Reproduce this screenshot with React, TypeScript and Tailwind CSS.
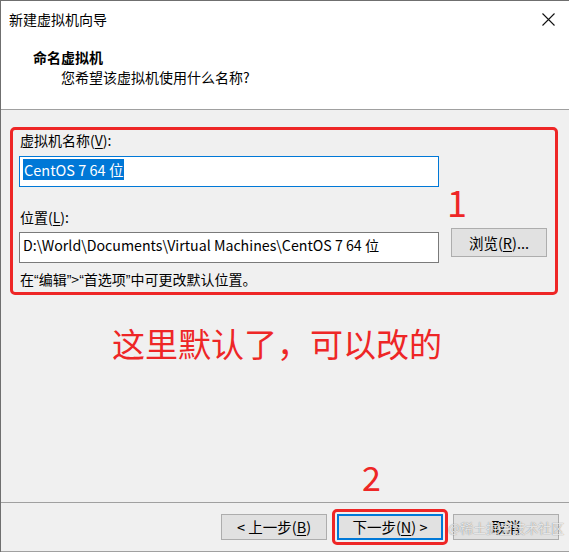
import { useState } from 'react';

const font = { fontFamily: '"Noto Sans CJK SC", "Noto Sans", sans-serif' };

function WinButton({ children, focused = false }: { children: React.ReactNode; focused?: boolean }) {
  return (
    <button
      className={
        'flex h-[26px] w-[106px] items-center justify-center bg-[#e1e1e1] text-[14.5px] leading-none text-black ' +
        (focused ? 'border-2 border-[#0078d7]' : 'border border-[#adadad]')
      }
    >
      {children}
    </button>
  );
}

// narrow quotes like the Windows UI font draws them
function Q({ c }: { c: string }) {
  return <span className="font-['Liberation_Sans',sans-serif]">{c}</span>;
}

export default function App() {
  const [name, setName] = useState('CentOS 7 64 位');
  const [path, setPath] = useState('D:\\World\\Documents\\Virtual Machines\\CentOS 7 64 位');

  return (
    <div
      style={font}
      className="relative flex h-[552px] w-[569px] flex-col overflow-hidden border-l border-t border-[#6f6f6f] bg-[#f0f0f0] text-black"
    >
      {/* title bar */}
      <div className="flex h-[36px] items-center justify-between bg-white pl-[8px] pr-[14px] text-[14px]">
        <span>新建虚拟机向导</span>
        <svg width="13" height="13" viewBox="0 0 13 13">
          <path d="M0.5 0.5 L12.5 12.5 M12.5 0.5 L0.5 12.5" stroke="#111" strokeWidth="1.1" fill="none" />
        </svg>
      </div>

      {/* header */}
      <div className="flex h-[73px] flex-col border-b border-[#a0a0a0] bg-white pl-[32px] pt-[10px] text-[14px]">
        <span className="font-bold leading-[20px]">命名虚拟机</span>
        <span className="pl-[28px] leading-[20px]">您希望该虚拟机使用什么名称?</span>
      </div>

      {/* body */}
      <div className="flex flex-1 flex-col">
        <div className="ml-[9px] mr-[11px] mt-[17px] flex h-[168px] rounded-[5px] border-[3px] border-[#ee2626] pl-[6px] text-[14px]">
          <div className="flex w-[420px] flex-col">
            <span className="pl-[1px] leading-[20px]">
              虚拟机名称(<span className="underline underline-offset-2">V</span>):
            </span>
            <div className="mt-[6px] h-[31px] border border-[#0078d7] bg-white px-[3px] pt-[2px] text-[14.5px]">
              <span className="bg-[#0078d7] px-[1px] leading-[19px] text-white">{name}</span>
              <input className="hidden" value={name} onChange={(e) => setName(e.target.value)} />
            </div>
            <span className="mt-[20px] pl-[1px] leading-[20px]">
              位置(<span className="underline underline-offset-2">L</span>):
            </span>
            <input
              className="mt-[5px] h-[31px] border border-[#7a7a7a] bg-white px-[3px] pb-[6px] text-[14.2px] outline-none"
              value={path}
              onChange={(e) => setPath(e.target.value)}
            />
            <span className="mt-[6px] pl-[1px] leading-[20px]">
              在<Q c="“" />编辑<Q c="”" />&gt;<Q c="“" />首选项<Q c="”" />中可更改默认位置。
            </span>
          </div>
          <div className="ml-[12px] flex w-[96px] flex-col">
            <span className="ml-[-4px] mt-[50px] h-[42px] text-[36px] leading-[42px] text-[#ee2626]">1</span>
            <button className="mt-[6px] flex h-[29px] w-[96px] items-center justify-center border border-[#adadad] bg-[#e1e1e1] text-[14.5px]">
              浏览(<span className="underline underline-offset-2">R</span>)...
            </button>
          </div>
        </div>

        <div className="mt-[26px] pl-[111px] text-[33px] leading-[44px] text-[#ee2626]">这里默认了，可以改的</div>
        <div className="mt-[92px] pl-[361px] text-[34px] leading-[40px] text-[#ee2626]">2</div>
      </div>

      {/* footer */}
      <div className="flex h-[50px] items-center gap-[5px] border-b border-t border-[#a0a0a0] pl-[220px]">
        <WinButton>
          &lt; 上一步(<span className="underline underline-offset-2">B</span>)
        </WinButton>
        <div className="rounded-[5px] border-[3px] border-[#ee2626] p-[2px]">
          <WinButton focused>
            下一步(<span className="underline underline-offset-2">N</span>) &gt;
          </WinButton>
        </div>
        <WinButton>取消</WinButton>
      </div>

      {/* site watermark laid over the cancel button */}
      <span className="pointer-events-none absolute left-[447px] top-[517px] text-[13px] leading-[20px] text-white/80 [text-shadow:0_0_1px_rgba(0,0,0,0.55)]">
        @稀土掘金技术社区
      </span>
    </div>
  );
}
